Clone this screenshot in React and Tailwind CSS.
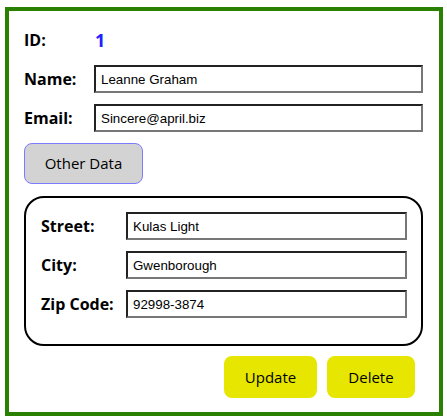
import React from 'react';

const LABEL = 'font-["Open_Sans",sans-serif] font-bold text-[16px] text-black';
const INPUT =
  'h-[28px] border-2 border-t-[#222] border-l-[#222] border-b-[#777] border-r-[#777] pl-[5px] font-["Liberation_Sans",Arial,sans-serif] text-[13.33px] text-black outline-none bg-white';

function Row({ label, value, labelW, inputW }) {
  return (
    <div className="flex items-center">
      <label className={`${LABEL} shrink-0`} style={{ width: labelW }}>{label}</label>
      <input className={INPUT} style={{ width: inputW }} defaultValue={value} />
    </div>
  );
}

export default function App() {
  return (
    <div className="w-[447px] h-[419px] bg-white pt-[7px] pl-[5px]">
      <div className="w-[438px] h-[409px] border-4 border-[#2a8000] pt-[15px] pl-[15px] pr-[16px]">
        <div className="flex flex-col gap-[11px]">
          {/* id */}
          <div className="flex items-center h-[28px]">
            <span className={`${LABEL} w-[70px]`}>ID:</span>
            <span className='font-["Open_Sans",sans-serif] font-bold text-[18px] text-[#1f1fff] ml-[1px]'>1</span>
          </div>
          <Row label="Name:" value="Leanne Graham" labelW={70} inputW={329} />
          <Row label="Email:" value="Sincere@april.biz" labelW={70} inputW={329} />

          <div>
            <button className='w-[119px] h-[41px] bg-[#d3d3d3] border border-[#7b7bff] rounded-[8px] font-["Open_Sans",sans-serif] font-medium text-[15px] text-black'>
              Other Data
            </button>
          </div>
        </div>

        {/* address */}
        <div className="mt-[12px] w-[399px] border-2 border-black rounded-[20px] pt-[14px] pl-[15px] pr-[14px] pb-[26px] flex flex-col gap-[11px]">
          <Row label="Street:" value="Kulas Light" labelW={85} inputW={281} />
          <Row label="City:" value="Gwenborough" labelW={85} inputW={281} />
          <Row label="Zip Code:" value="92998-3874" labelW={85} inputW={281} />
        </div>

        <div className="mt-[10px] w-[399px] flex justify-end gap-[10px] pr-[8px]">
          <button className='w-[93px] h-[42px] bg-[#e6e600] rounded-[8px] font-["Open_Sans",sans-serif] font-medium text-[15px] text-black'>
            Update
          </button>
          <button className='w-[88px] h-[42px] bg-[#e6e600] rounded-[8px] font-["Open_Sans",sans-serif] font-medium text-[15px] text-black'>
            Delete
          </button>
        </div>
      </div>
    </div>
  );
}
